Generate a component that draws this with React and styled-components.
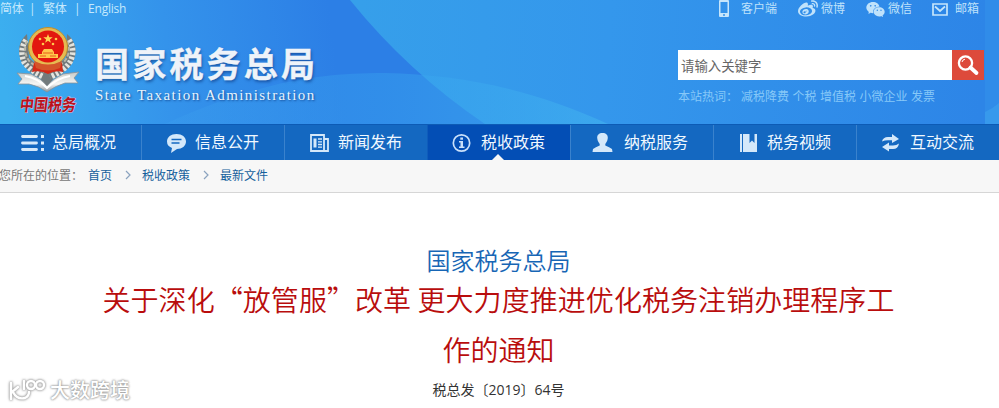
import React from "react";
import styled, { createGlobalStyle } from "styled-components";
import { FaWeibo } from "react-icons/fa";
import { AiFillWechat } from "react-icons/ai";

const GlobalStyle = createGlobalStyle`
  * {
    box-sizing: border-box;
  }
  body {
    margin: 0;
    background-color: white;
    font-family: "Open Sans", "Noto Sans CJK SC", sans-serif;
    overflow: hidden;
  }
`;

const Page = styled.div`
  position: relative;
  width: 999px;
  height: 408px;
  overflow: hidden;
`;

const Header = styled.header`
  position: relative;
  height: 124px;
  overflow: hidden;
`;

const Waves = styled.svg`
  position: absolute;
  top: 0;
  left: 0;
`;

const HeaderIn = styled.div`
  position: relative;
  display: flex;
  justify-content: space-between;
`;

const Brand = styled.div`
  display: flex;
  flex-direction: column;
`;

const Langs = styled.div`
  display: flex;
  height: 18px;
  line-height: 18px;
  font-size: 12px;
  letter-spacing: -0.2px;
  color: #c5e9fd;
  white-space: pre;
`;

const Lang = styled.span`
  width: ${(props) => props.$width}px;
`;

const LogoRow = styled.div`
  display: flex;
  margin-top: 6px;
`;

const Names = styled.div`
  padding: 16px 0 0 5px;
`;

const SiteName = styled.h1`
  margin: 0;
  height: 46px;
  line-height: 45px;
  font-family: "Noto Sans CJK SC", sans-serif;
  font-size: 34px;
  font-weight: 700;
  letter-spacing: 3.2px;
  white-space: nowrap;
  color: #eef3f9;
  text-shadow: 1px 2px 3px rgba(10, 50, 120, 0.6);
  -webkit-text-stroke: 0.4px #eef3f9;
`;

const SiteNameEn = styled.p`
  margin: 0;
  line-height: 18px;
  font-family: "Liberation Serif", serif;
  font-size: 15px;
  letter-spacing: 1.42px;
  white-space: nowrap;
  color: #e6f3fd;
  text-shadow: 1px 1px 2px rgba(10, 50, 120, 0.7);
`;

const Tools = styled.div`
  width: 321px;
`;

const Links = styled.div`
  display: flex;
  height: 18px;
  padding-left: 40px;
`;

const ToolLink = styled.a`
  display: flex;
  align-items: center;
  gap: ${(props) => props.$gap}px;
  width: ${(props) => props.$width}px;
  font-size: 12px;
  line-height: 18px;
  color: #bfe2fb;
  white-space: nowrap;
  svg {
    flex: none;
  }
`;

const Search = styled.div`
  display: flex;
  width: 306px;
  height: 30px;
  margin-top: 32px;
`;

const SearchInput = styled.input`
  width: 274px;
  padding: 0 4px 1px 3px;
  border: 0;
  outline: 0;
  background-color: white;
  font-family: "Noto Sans CJK SC", sans-serif;
  font-size: 13.4px;
  &::placeholder {
    color: #666;
    opacity: 1;
  }
`;

const SearchButton = styled.button`
  display: flex;
  width: 32px;
  height: 30px;
  padding: 0;
  border: 0;
  background-color: #dd4a3b;
`;

const HotWords = styled.div`
  display: flex;
  margin-top: 8px;
  line-height: 18px;
  font-size: 12px;
  color: #86c8f8;
  white-space: nowrap;
`;

const HotLabel = styled.span`
  width: 63px;
`;

const HotWord = styled.span`
  margin-right: 3.5px;
`;

const Nav = styled.nav`
  display: flex;
  height: 36px;
  margin-left: -2px;
  width: 1001px;
  background-color: #1468c1;
  border-top: 1px solid #0d5bb5;
`;

const NavItem = styled.a`
  position: relative;
  display: flex;
  flex: none;
  align-items: center;
  width: 143px;
  padding-left: 21px;
  color: #f0f8ff;
  font-size: 16px;
  white-space: nowrap;
  background-color: ${(props) => (props.$active ? "#034eb5" : "transparent")};
  border-left: 1px solid ${(props) => (props.$active ? "#0f5cbb" : "#3a82cd")};
  svg {
    flex: none;
    margin-right: 6px;
  }
`;

const NavText = styled.span`
  height: 24px;
  line-height: 23px;
`;

const Pointer = styled.i`
  position: absolute;
  bottom: 0;
  left: 64px;
  border: 6px solid transparent;
  border-top: 0;
  border-bottom-color: #f7f7f7;
`;

const Crumbs = styled.div`
  display: flex;
  height: 33px;
  line-height: 31px;
  background-color: #f7f7f7;
  border-bottom: 1px solid #d6d6d6;
  font-size: 12px;
  color: #777;
  white-space: nowrap;
`;

const CrumbLabel = styled.span`
  width: 89px;
  margin-left: -1px;
`;

const Crumb = styled.a`
  color: #15609c;
`;

const Arrow = styled.svg`
  margin: 10px 10px 0 12px;
`;

const Article = styled.main`
  display: flex;
  flex-direction: column;
  align-items: center;
  padding: 49px 2px 0 0;
  font-family: "Noto Sans CJK SC", sans-serif;
`;

const Org = styled.h2`
  margin: 0;
  line-height: 36px;
  font-size: 24px;
  font-weight: 350;
  color: #1766b5;
`;

const Title = styled.h3`
  margin: -4px 0 0;
  line-height: 50px;
  font-size: 28px;
  font-weight: 350;
  letter-spacing: 0.06px;
  text-align: center;
  white-space: nowrap;
  color: #b90d0d;
`;

const DocNumber = styled.p`
  margin: 4px 0 0;
  line-height: 24px;
  font-family: "Open Sans", "Noto Sans CJK SC", sans-serif;
  font-size: 14px;
  color: #333;
`;

const Watermark = styled.div`
  position: absolute;
  left: 8px;
  bottom: 4px;
  display: flex;
  align-items: center;
  font-size: 20px;
  line-height: 28px;
  font-family: "Noto Sans CJK SC", sans-serif;
  font-weight: 500;
  color: white;
  text-shadow: 0 0 2px #999, 0 0 2px #aaa, 0 0 3px #bbb;
  svg {
    filter: drop-shadow(0 0 1px #999) drop-shadow(0 0 1px #bbb);
  }
`;

const Background = () => (
  <Waves width="999" height="124" viewBox="0 0 999 124">
    <defs>
      <linearGradient id="base" gradientUnits="userSpaceOnUse" x1="0" y1="50" x2="330" y2="10">
        <stop offset="0" stopColor="#3cafef" />
        <stop offset="0.5" stopColor="#3493eb" />
        <stop offset="1" stopColor="#2c7fe6" />
      </linearGradient>
      <linearGradient id="sweep" gradientUnits="userSpaceOnUse" x1="360" y1="0" x2="985" y2="40">
        <stop offset="0" stopColor="#369fea" />
        <stop offset="0.4" stopColor="#3497ec" />
        <stop offset="1" stopColor="#2d85e7" />
      </linearGradient>
      <linearGradient id="hill" gradientUnits="userSpaceOnUse" x1="160" y1="0" x2="610" y2="0">
        <stop offset="0" stopColor="#40a5ef" stopOpacity="0.2" />
        <stop offset="0.5" stopColor="#38a5ef" stopOpacity="0.4" />
        <stop offset="1" stopColor="#43b5ef" stopOpacity="0.55" />
      </linearGradient>
    </defs>
    <rect width="999" height="124" fill="url(#base)" />
    <path d="M350 0Q408 72 485 124H999V0Z" fill="url(#sweep)" />
    <path d="M165 124C260 81 320 73 385 73C460 75 530 88 608 124Z" fill="url(#hill)" />
    <rect x="985" width="14" height="124" fill="#308ce9" />
    <path d="M985 112Q992 109 999 103V124H985Z" fill="#3799ec" />
  </Waves>
);

const Emblem = () => (
  <svg width="90" height="96" viewBox="0 0 90 96">
    <defs>
      <linearGradient id="silver" x1="0" y1="0" x2="0" y2="1">
        <stop offset="0" stopColor="#c8cbc9" />
        <stop offset="0.6" stopColor="#f6f6f4" />
        <stop offset="1" stopColor="#8b9298" />
      </linearGradient>
    </defs>
    {/* wheat ears */}
    <path d="M27 10C14 21 16 43 40 54L47 63L54 54C79 43 81 21 67 10L66 34L47 49L29 34Z" fill="#727a7c" />
    <path
      d="M26 16Q19 26 24 38Q30 47 44 53M69 16Q76 26 70 38Q64 47 50 53"
      fill="none"
      stroke="#e4e4de"
      strokeWidth="5.5"
      strokeDasharray="2.6 1.8"
    />
    <path d="M27 17Q22 28 30 38L44 48M67 17Q72 28 64 38L50 48" fill="none" stroke="#b9b7a6" strokeWidth="2" strokeDasharray="4 2" />
    {/* ribbon */}
    <path
      d="M17 49L31 50Q41 54 47 62Q54 54 63 50L79 48L74 54L78 59L65 59Q55 62 47 68Q39 62 29 60L18 60L22 55Z"
      fill="url(#silver)"
      stroke="#8a9298"
      strokeWidth="0.8"
    />
    <path d="M25 52Q38 54 47 64Q57 54 70 52" fill="none" stroke="#fff" strokeWidth="2" />
    {/* national emblem */}
    <path d="M34 39H62L63 48Q55 46 48 50Q41 46 32 48Z" fill="#d42a18" />
    <circle cx="48" cy="23" r="19.5" fill="#e6ba51" stroke="#be8f2e" />
    <circle cx="48" cy="22.500" r="16" fill="#e3170f" />
    <path d="M34 37Q48 44 62 37L60 44Q48 49 36 44Z" fill="#d4542a" />
    <path d="M48 10L49.2 13.3H52.7L49.9 15.4L50.9 18.7L48 16.7L45.1 18.7L46.1 15.4L43.3 13.3H46.8Z" fill="#ffd552" />
    <g fill="#ffc94b">
      <circle cx="40" cy="15" r="1.3" />
      <circle cx="56" cy="15" r="1.3" />
      <circle cx="43" cy="20" r="1.3" />
      <circle cx="53" cy="20" r="1.3" />
      <path d="M42 28L44 25H52L54 28V30H58V34H38V30H42Z" />
    </g>
    <path d="M43 29H53M40 32H46M50 32H56" stroke="#e85a1c" />
    <text
      x="19"
      y="87"
      fontFamily="Noto Sans CJK SC, sans-serif"
      fontSize="17"
      fontWeight="700"
      fill="#ba101c"
      stroke="#e9ccd5"
      strokeWidth="0.8"
      paintOrder="stroke"
      textLength="56"
      lengthAdjust="spacingAndGlyphs"
      transform="skewX(-7) translate(11 0)"
    >
      中国税务
    </text>
  </svg>
);

const PhoneIcon = () => (
  <svg width="12" height="18" viewBox="0 0 12 18">
    <path fillRule="evenodd" d="M2 0H10Q11 0 11 1V16Q11 17 10 17H2Q1 17 1 16V1Q1 0 2 0ZM2.5 2V13H9.5V2ZM5 14.2V15.8H7V14.2Z" fill="#c5e5fb" />
  </svg>
);

const MailIcon = () => (
  <svg width="16" height="13" viewBox="0 0 16 13">
    <path d="M1 1H15V12H1ZM3 3.5L8 8L13 3.5" fill="none" stroke="#c5e5fb" strokeWidth="1.7" />
  </svg>
);

const SearchIcon = () => (
  <svg width="32" height="30" viewBox="0 0 32 30">
    <circle cx="13.5" cy="13" r="6.6" fill="none" stroke="#fff" strokeWidth="2.3" />
    <path d="M10 12Q10.5 9.5 13 9.2" fill="none" stroke="#fff" strokeWidth="1" />
    <path d="M18.5 17.5L24.5 23" stroke="#fff" strokeWidth="3.8" strokeLinecap="round" />
  </svg>
);

// every nav drawing sits in the same 26x24 box
const navIcons = {
  list: (
    <>
      <path d="M2.500 5.500H16.500M2.500 12H16.500M2.500 18.500H16.500" stroke="#d4e8fa" strokeWidth="2.800" strokeLinecap="round" />
      <path d="M21 4H24V7H21ZM21 10.500H24V13.500H21ZM21 17H24V20H21Z" fill="#d4e8fa" />
    </>
  ),
  chat: (
    <>
      <path d="M13.5 3C19 3 23 6 23 10.5S19 18 14 18L8 22L9 17Q4 15 4 10.5C4 6 8 3 13.5 3Z" fill="#d4e8fa" />
      <path d="M8.5 8.5H18.5M8.5 12H16.5" stroke="#1468c1" strokeWidth="1.5" />
    </>
  ),
  news: (
    <>
      <path d="M5 4H18V20H5ZM18 8H22V20H17" fill="none" stroke="#d4e8fa" strokeWidth="1.800" />
      <path d="M7.500 7.500H10.500V16.500H7.500Z" fill="#d4e8fa" />
      <path d="M12 8H16M12 10.800H16M12 13.500H16M12 16.200H16" stroke="#d4e8fa" strokeWidth="1.300" />
    </>
  ),
  info: (
    <>
      <circle cx="12.500" cy="12" r="8.200" fill="none" stroke="#c9e0fa" strokeWidth="1.700" />
      <path d="M11.300 6.500H14V8.800H11.300ZM10 10H14V15.500H15.500V17H10V15.500H11.500V11.500H10Z" fill="#c9e0fa" />
    </>
  ),
  user: (
    <path
      d="M10 2C13.500 2 15.500 4 15.300 7C15 10.500 13.500 11.500 12.800 13V14.500Q17 16 19.500 18L20 21H0L0.500 18Q3 16 7.200 14.500V13C6.500 11.500 5 10.500 4.700 7C4.500 4 6.500 2 10 2Z"
      transform="translate(0.500 0)"
      fill="#d4e8fa"
    />
  ),
  book: <path d="M5 3H7V21H5ZM8 3H14.500V12L17 9.500L19.500 12V3H22V21H8Z" fill="#d4e8fa" />,
  swap: (
    <path
      d="M4 10.500Q5 6 10 6H14V3L21 8L14 12V9.200H10Q6.500 9.200 4 10.500ZM21 12.500Q20 18 15 18H11V20.500L4 16L11 11.500V14.500H15Q18.500 14.500 21 12.500Z"
      fill="#d4e8fa"
    />
  ),
};

const navItems = [
  { icon: "list", text: "总局概况" },
  { icon: "chat", text: "信息公开" },
  { icon: "news", text: "新闻发布" },
  { icon: "info", text: "税收政策", active: true },
  { icon: "user", text: "纳税服务" },
  { icon: "book", text: "税务视频" },
  { icon: "swap", text: "互动交流" },
];

const hotWords = ["减税降费", "个税", "增值税", "小微企业", "发票"];

const CrumbArrow = () => (
  <Arrow width="8" height="10" viewBox="0 0 8 10">
    <path d="M2 1L6 5L2 9" fill="none" stroke="#8ba3bf" strokeWidth="1.2" />
  </Arrow>
);

const App = () => {
  return (
    <Page>
      <GlobalStyle />
      <Header>
        <Background />
        <HeaderIn>
          <Brand>
            <Langs>
              <Lang $width={29}>简体</Lang>
              <Lang $width={14}>|</Lang>
              <Lang $width={31}>繁体</Lang>
              <Lang $width={14}>|</Lang>
              <Lang $width={50}>English</Lang>
            </Langs>
            <LogoRow>
              <Emblem />
              <Names>
                <SiteName>国家税务总局</SiteName>
                <SiteNameEn>State Taxation Administration</SiteNameEn>
              </Names>
            </LogoRow>
          </Brand>
          <Tools>
            <Links>
              <ToolLink $width={80} $gap={11}>
                <PhoneIcon />
                客户端
              </ToolLink>
              <ToolLink $width={67} $gap={3}>
                <FaWeibo size={20} />
                微博
              </ToolLink>
              <ToolLink $width={67} $gap={2}>
                <AiFillWechat size={21} />
                微信
              </ToolLink>
              <ToolLink $width={48} $gap={7}>
                <MailIcon />
                邮箱
              </ToolLink>
            </Links>
            <Search>
              <SearchInput placeholder="请输入关键字" />
              <SearchButton>
                <SearchIcon />
              </SearchButton>
            </Search>
            <HotWords>
              <HotLabel>本站热词：</HotLabel>
              {hotWords.map((word) => (
                <HotWord key={word}>{word}</HotWord>
              ))}
            </HotWords>
          </Tools>
        </HeaderIn>
      </Header>
      <Nav>
        {navItems.map((item) => (
          <NavItem key={item.icon} $active={item.active}>
            <svg width="26" height="24" viewBox="0 0 26 24">
              {navIcons[item.icon]}
            </svg>
            <NavText>{item.text}</NavText>
            {item.active && <Pointer />}
          </NavItem>
        ))}
      </Nav>
      <Crumbs>
        <CrumbLabel>您所在的位置：</CrumbLabel>
        <Crumb>首页</Crumb>
        <CrumbArrow />
        <Crumb>税收政策</Crumb>
        <CrumbArrow />
        <Crumb>最新文件</Crumb>
      </Crumbs>
      <Article lang="zh-CN">
        <Org>国家税务总局</Org>
        <Title>
          关于深化“放管服”改革 更大力度推进优化税务注销办理程序工
          <br />
          作的通知
        </Title>
        <DocNumber>税总发〔2019〕64号</DocNumber>
      </Article>
      <Watermark>
        <svg width="42" height="28" viewBox="0 0 42 28">
          <g fill="none" stroke="#fff" strokeWidth="2.4" strokeLinecap="round">
            <path d="M3 7V23M4 16L10 11M5 16Q9 24 17 22Q21 20 21 16" />
            <path d="M16 5V13" />
            <circle cx="23" cy="9" r="4" />
            <circle cx="32" cy="9" r="4" />
          </g>
        </svg>
        大数跨境
      </Watermark>
    </Page>
  );
};

export default App;
